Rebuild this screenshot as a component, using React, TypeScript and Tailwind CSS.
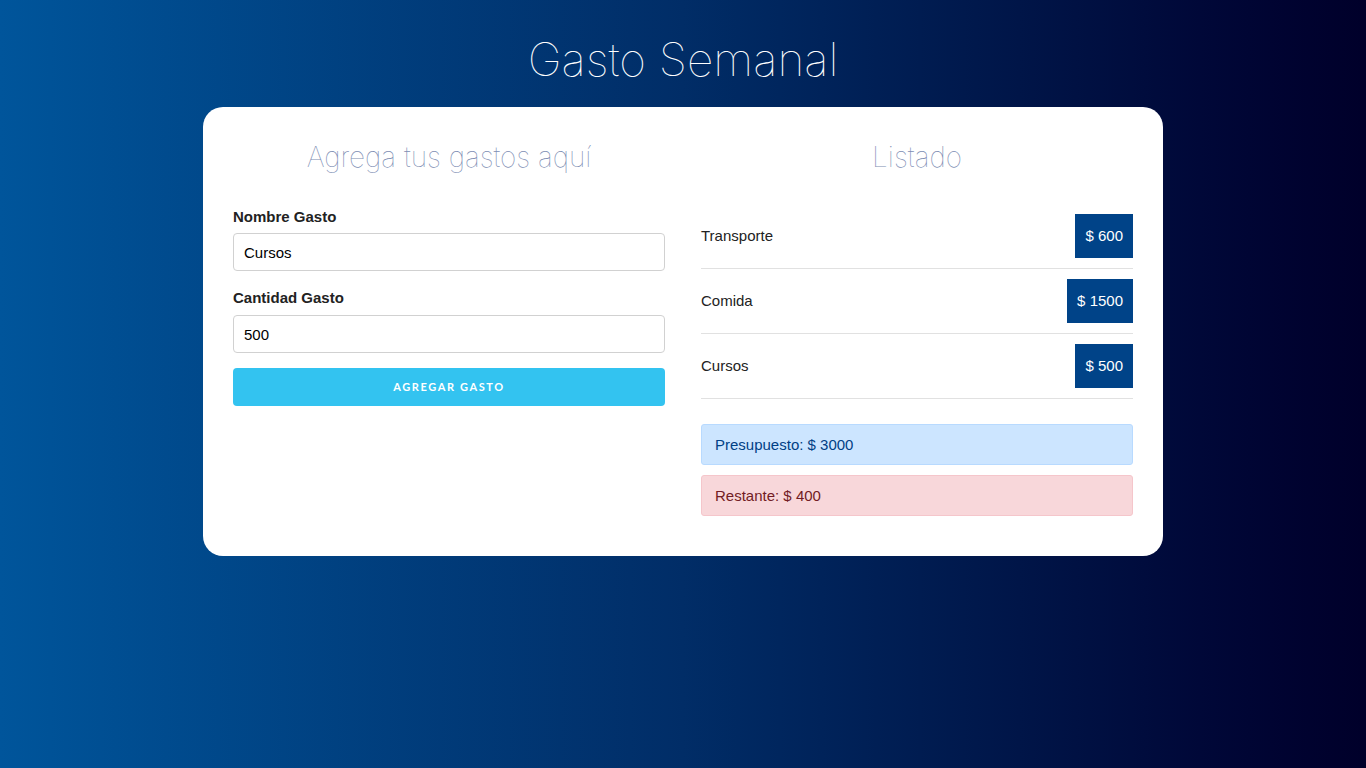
import { useState } from "react"

type Gasto = { id: number; nombre: string; cantidad: number }

const gastosIniciales: Gasto[] = [
  { id: 1, nombre: "Transporte", cantidad: 600 },
  { id: 2, nombre: "Comida", cantidad: 1500 },
  { id: 3, nombre: "Cursos", cantidad: 500 },
]

const Formulario = () => {
  const [nombre, setNombre] = useState("Cursos")
  const [cantidad, setCantidad] = useState("500")

  return (
    <form onSubmit={(e) => e.preventDefault()} className="flex flex-col">
      <h2 className="text-center font-['Inter',sans-serif] font-thin text-[28px] leading-[38px] text-[#7d8db3] mb-[31px]">Agrega tus gastos aquí</h2>

      <label className="font-bold text-[15px] leading-[20px] text-[#222] mb-[6px]">Nombre Gasto</label>
      <input
        type="text"
        value={nombre}
        onChange={(e) => setNombre(e.target.value)}
        className="h-[38px] border border-[#d1d1d1] rounded-[4px] px-[10px] text-[15px] text-black bg-white outline-none mb-[17px]"
      />

      <label className="font-bold text-[15px] leading-[20px] text-[#222] mb-[7px]">Cantidad Gasto</label>
      <input
        type="number"
        value={cantidad}
        onChange={(e) => setCantidad(e.target.value)}
        className="h-[38px] border border-[#d1d1d1] rounded-[4px] px-[10px] text-[15px] text-black bg-white outline-none mb-[15px] [appearance:textfield]"
      />

      <button
        type="submit"
        className="h-[38px] rounded-[4px] bg-[#33c3f0] text-white font-['Lato',sans-serif] font-bold text-[11px] tracking-[1.6px] uppercase"
      >
        Agregar Gasto
      </button>
    </form>
  )
}

const Listado = ({ gastos }: { gastos: Gasto[] }) => (
  <div>
    <h2 className="text-center font-['Inter',sans-serif] font-thin text-[28px] leading-[38px] text-[#7d8db3] mb-[28px]">Listado</h2>
    <ul>
      {gastos.map((g) => (
        <li key={g.id} className="flex items-center justify-between py-[10px] border-b border-[#e1e1e1]">
          <span className="text-[15px] text-[#222]">{g.nombre}</span>
          <span className="bg-[#004388] text-white text-[15px] leading-[20px] px-[10px] py-[12px]">$ {g.cantidad}</span>
        </li>
      ))}
    </ul>
  </div>
)

export default function App() {
  const [gastos] = useState<Gasto[]>(gastosIniciales)
  const presupuesto = 3000
  const restante = presupuesto - gastos.reduce((t, g) => t + g.cantidad, 0)

  return (
    <div className="min-h-screen bg-gradient-to-r from-[#00559b] via-[#012d67] to-[#00002a] font-['Liberation_Sans',Arial,sans-serif] pt-[28px]">
      <h1 className="text-center font-['Inter',sans-serif] font-thin text-[46px] leading-[62px] text-white mb-[17px]">Gasto Semanal</h1>

      <div className="mx-auto w-[960px] bg-white rounded-[20px] px-[30px] pt-[31px] pb-[40px]">
        <div className="grid grid-cols-2 gap-x-[36px]">
          <Formulario />
          <div>
            <Listado gastos={gastos} />
            <div className="mt-[25px] border border-[#b8daff] bg-[#cce5ff] text-[#004085] rounded-[3px] px-[13px] py-[8px] text-[15px] leading-[23px]">
              Presupuesto: $ {presupuesto}
            </div>
            <div className="mt-[10px] border border-[#f5c6cb] bg-[#f8d7da] text-[#721c24] rounded-[3px] px-[13px] py-[8px] text-[15px] leading-[23px]">
              Restante: $ {restante}
            </div>
          </div>
        </div>
      </div>
    </div>
  )
}
